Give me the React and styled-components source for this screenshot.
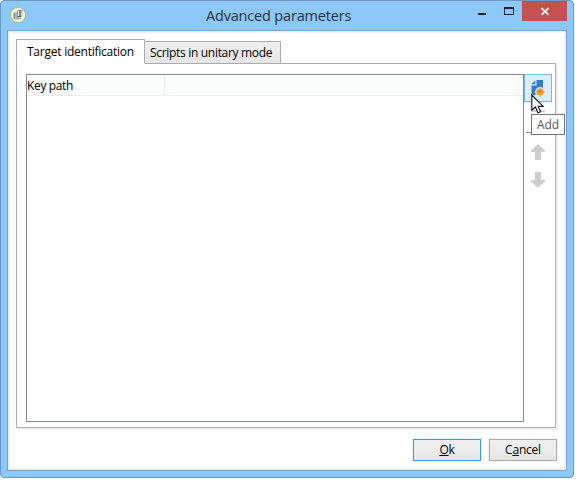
import React from "react";
import styled, { createGlobalStyle } from "styled-components";

const GlobalStyle = createGlobalStyle`
  * { box-sizing: border-box; }
  body { margin: 0; background: #fff; overflow: hidden; }
  button { font: inherit; color: inherit; padding: 0; margin: 0; }
`;

const Dialog = styled.main`
  position: relative;
  width: 574px;
  height: 478px;
  padding: 0 6px 6px;
  display: flex;
  flex-direction: column;
  border: 1px solid #6a98c2;
  border-radius: 4px;
  background: #8dc8fa;
  font: 12px/16px "Open Sans", "Noto Sans", sans-serif;
  color: #000;
`;

const TitleBar = styled.header`
  flex: 0 0 29px;
  display: grid;
  grid-template-columns: 196px 1fr 103px;
  align-items: start;
`;

const AppIcon = styled.svg`
  margin: 5px 0 0 2px;
  width: 18px;
  height: 18px;
`;

const Title = styled.h1`
  margin: 5px 0 0 3px;
  font-size: 14.5px;
  line-height: 20px;
  font-weight: 400;
  letter-spacing: -0.18px;
  color: #27323f;
  white-space: nowrap;
`;

const WindowControls = styled.div`
  display: flex;
  justify-content: flex-end;
`;

const WindowButton = styled.button`
  width: ${(p) => p.$width}px;
  height: 20px;
  border: 0;
  background: ${(p) => (p.$close ? "#c75050" : "transparent")};
  svg { display: block; width: 100%; height: 20px; }
`;

const Client = styled.section`
  flex: 1;
  display: flex;
  flex-direction: column;
  padding: 6px 6px 6px;
  border: 1px solid #70a2ce;
  box-shadow: inset 0 0 0 2px #f0f0f0;
  background: #fff;
`;

const TabList = styled.nav`
  display: flex;
  align-items: flex-end;
  height: 25px;
  margin: 2px 0 -1px 2px;
`;

const Tab = styled.button`
  width: ${(p) => p.$width}px;
  height: ${(p) => (p.$active ? 25 : 23)}px;
  padding: ${(p) => (p.$active ? "0 0 0 10px" : "0 0 0 5px")};
  border: 1px solid #acacac;
  border-left-width: ${(p) => (p.$active ? 1 : 0)}px;
  border-bottom-color: ${(p) => (p.$active ? "#fff" : "#acacac")};
  background: ${(p) => (p.$active ? "#fff" : "linear-gradient(#f0f0f0, #e5e5e5)")};
  text-align: left;
  white-space: nowrap;
  letter-spacing: ${(p) => p.$spacing}px;
  z-index: 1;
`;

const Panel = styled.div`
  width: 540px;
  height: 365px;
  margin-left: 2px;
  padding: 10px 3px 5px 9px;
  display: flex;
  border: 1px solid #acacac;
  box-shadow: 2px 2px 0 #f0f0f0;
`;

const Table = styled.div`
  width: 498px;
  height: 348px;
  border: 1px solid #828790;
`;

const TableHeader = styled.div`
  display: grid;
  grid-template-columns: 138px 1fr;
  height: 21px;
  border-bottom: 1px solid #e3eefa;
  background: #fcfcfc;
`;

const HeaderCell = styled.div`
  padding: 3px 0 0 0;
  border-right: ${(p) => (p.$divided ? "1px solid #e3eefa" : "0")};
  letter-spacing: -0.35px;
`;

const Toolbar = styled.aside`
  width: 28px;
  display: flex;
  flex-direction: column;
`;

const ToolButton = styled.button`
  height: 28px;
  border: 1px solid ${(p) => (p.$hot ? "#78b4eb" : "transparent")};
  background: ${(p) => (p.$hot ? "#dceefb" : "transparent")};
  svg { display: block; width: 26px; height: 26px; }
`;

const Divider = styled.hr`
  width: 24px;
  height: 1px;
  margin: 2px 2px 5px;
  border: 0;
  background: #8c8c8c;
`;

const Footer = styled.footer`
  display: flex;
  justify-content: flex-end;
  gap: 8px;
  margin: 11px 3px 0 0;
`;

const ActionButton = styled.button`
  width: 68px;
  height: 22px;
  border: 1px solid ${(p) => (p.$primary ? "#3399ff" : "#acacac")};
  background: linear-gradient(#f0f0f0, #e5e5e5);
  box-shadow: 0 0 0 1px #f3f3f3;
  letter-spacing: -0.2px;
  line-height: 18px;
  u { text-underline-offset: 1px; text-decoration-skip-ink: none; }
`;

const Tooltip = styled.div`
  position: absolute;
  left: 530px;
  top: 113px;
  width: 34px;
  height: 21px;
  border: 1px solid #767676;
  background: #fff;
  color: #575757;
  line-height: 19px;
  text-align: center;
  letter-spacing: -0.1px;
`;

const Pointer = styled.svg`
  position: absolute;
  left: 530px;
  top: 93px;
  width: 13px;
  height: 20px;
`;

const Arrow = ({ down }) => (
  <svg viewBox="0 0 26 26">
    <path
      d="M13 5 20 11.5V13H16V21H10V13H6V11.5Z"
      fill="#cdcdcd"
      transform={down ? "rotate(180 13 13)" : undefined}
    />
  </svg>
);

export default function App() {
  return (
    <>
      <GlobalStyle />
      <Dialog>
        <TitleBar>
          <AppIcon viewBox="0 0 18 18">
            <circle cx="9" cy="9" r="7.6" fill="#f4f5ec" stroke="#a5c85c" strokeWidth="1" />
            <path d="M4 7.5 6 6H9V13.5H5.5L4 12Z" fill="#b4b9b3" />
            <path d="M5.5 7V13M8.5 5V12.5H12" fill="none" stroke="#8b928e" />
            <path d="M9 4.5H13V10" fill="none" stroke="#a3aaa5" />
            <path d="M11 4V10.5M9 10.5H12" fill="none" stroke="#39443e" strokeWidth="1.2" />
          </AppIcon>
          <Title>Advanced parameters</Title>
          <WindowControls>
            <WindowButton $width={27} aria-label="Minimize">
              <svg viewBox="0 0 27 20"><rect x="10" y="12" width="8" height="2" fill="#1d2329" /></svg>
            </WindowButton>
            <WindowButton $width={27} aria-label="Maximize">
              <svg viewBox="0 0 27 20" shapeRendering="crispEdges">
                <path d="M9 6H19V14H9ZM10 8V13H18V8Z" fill="#1d2329" fillRule="evenodd" />
              </svg>
            </WindowButton>
            <WindowButton $width={45} $close aria-label="Close">
              <svg viewBox="0 0 45 20">
                <path d="M19.5 7.2 26.5 13.8M26.5 7.2 19.5 13.8" stroke="#fff" strokeWidth="1.8" />
              </svg>
            </WindowButton>
          </WindowControls>
        </TitleBar>
        <Client>
          <TabList>
            <Tab $active $width={129} $spacing={-0.24}>Target identification</Tab>
            <Tab $width={136} $spacing={-0.31}>Scripts in unitary mode</Tab>
          </TabList>
          <Panel>
            <Table>
              <TableHeader>
                <HeaderCell $divided>Key path</HeaderCell>
                <HeaderCell />
              </TableHeader>
            </Table>
            <Toolbar>
              <ToolButton $hot aria-label="Add">
                <svg viewBox="0 0 26 26">
                  <path d="M11.5 5H18V20H6.5V10.5H11.5Z" fill="#2d80cc" />
                  <path d="M6.5 9.2 10.3 5.2V9.2Z" fill="#2d80cc" />
                  <circle cx="15" cy="17" r="5" fill="#dceefb" />
                  <path d="M15 12.6V21.4M10.6 17H19.4M11.9 13.9 18.1 20.1M18.1 13.9 11.9 20.1" stroke="#f3920c" strokeWidth="1.3" />
                  <circle cx="15" cy="17" r="3" fill="#f3920c" />
                </svg>
              </ToolButton>
              <ToolButton aria-label="Delete">
                <svg viewBox="0 0 26 26"><path d="M7 8H20" stroke="#d0d0d0" strokeWidth="2" /></svg>
              </ToolButton>
              <Divider />
              <ToolButton aria-label="Move up"><Arrow /></ToolButton>
              <ToolButton aria-label="Move down"><Arrow down /></ToolButton>
            </Toolbar>
          </Panel>
          <Footer>
            <ActionButton $primary><u>O</u>k</ActionButton>
            <ActionButton>C<u>a</u>ncel</ActionButton>
          </Footer>
        </Client>
        <Tooltip>Add</Tooltip>
        <Pointer viewBox="0 0 13 20">
          <path d="M.8 1V16.2L4.4 13 7 18.8 9.6 17.7 7.2 12.4H12.2Z" fill="#fff" stroke="#111" strokeWidth="1.1" />
        </Pointer>
      </Dialog>
    </>
  );
}
